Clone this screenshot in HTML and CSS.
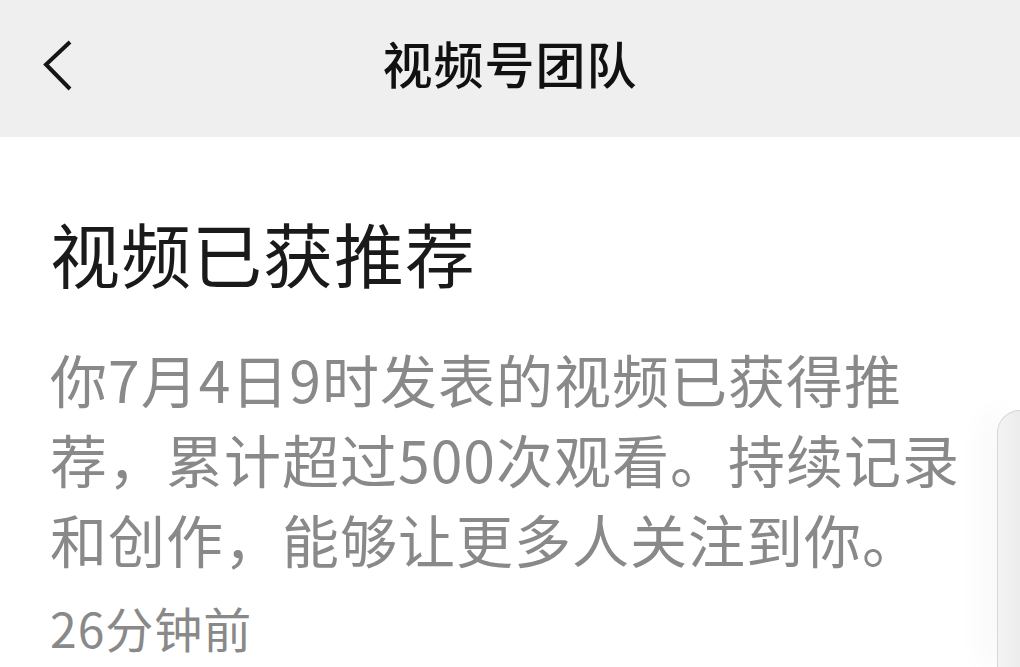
FILE: index.html
```html
<!DOCTYPE html>
<html lang="zh-CN">
<head>
<meta charset="utf-8">
<title>视频号团队</title>
<link rel="stylesheet" href="styles.css">
</head>
<body>
<header class="topbar">
  <div class="back">
    <svg width="36" height="56" viewBox="0 0 36 56" aria-hidden="true">
      <polyline points="30,4 6,26.5 30,51" fill="none" stroke="#151515" stroke-width="4" stroke-linecap="butt" stroke-linejoin="miter"/>
    </svg>
  </div>
  <h1 class="title">视频号团队</h1>
  <div class="spacer"></div>
</header>
<main class="content">
  <h2 class="heading">视频已获推荐</h2>
  <p class="body">你7月4日9时发表的视频已获得推荐，累计超过500次观看。持续记录和创作，能够让更多人关注到你。</p>
  <p class="time">26分钟前</p>
</main>
<div class="side-panel"></div>
</body>
</html>
```

FILE: styles.css
```css
html, body {
  margin: 0;
  padding: 0;
  background: #ffffff;
  width: 1020px;
  height: 667px;
  overflow: hidden;
  font-family: "Noto Sans CJK SC", "Noto Sans", sans-serif;
}

.topbar {
  height: 137px;
  box-sizing: border-box;
  background: #efefef;
  display: grid;
  grid-template-columns: 120px 1fr 120px;
  align-items: start;
  padding-top: 37px;
}

.back {
  margin-top: 1px;
  padding-left: 40px;
  height: 56px;
}

.back svg {
  display: block;
}

.title {
  margin: 0;
  text-align: center;
  font-size: 50px;
  line-height: 50px;
  letter-spacing: 1px;
  font-weight: 500;
  color: #111111;
}

.content {
  padding: 0 0 0 50px;
}

.heading {
  margin: 0;
  padding-top: 76px;
  font-size: 70px;
  line-height: 80px;
  letter-spacing: 1px;
  font-weight: 400;
  color: #1a1a1a;
}

.body {
  margin: 45px 0 0;
  width: 940px;
  font-size: 57px;
  line-height: 80px;
  letter-spacing: 1px;
  color: #898989;
}

.time {
  margin: 19px 0 0;
  font-size: 48px;
  line-height: 60px;
  letter-spacing: 1px;
  color: #898989;
}

.side-panel {
  position: absolute;
  left: 997px;
  top: 410px;
  width: 23px;
  height: 257px;
  box-sizing: border-box;
  border-radius: 26px 0 0 0;
  border-top: 1px solid #d6d6d6;
  border-left: 1px solid #d6d6d6;
  background: linear-gradient(to right, #f4f4f4, #ececec);
  box-shadow: -14px 0 30px rgba(0, 0, 0, 0.035);
}
```
